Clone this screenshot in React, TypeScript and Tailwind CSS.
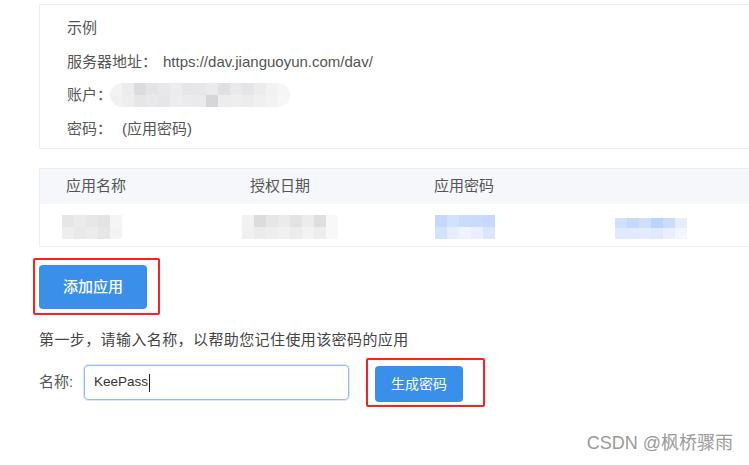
import React from "react";

const font = {
  fontFamily: '"Liberation Sans", "Noto Sans CJK SC", Arial, sans-serif',
};

type BlurProps = {
  cols: string[][];
  cell: number;
  className?: string;
};

// pixelated mosaic used to hide private values
function Mosaic({ cols, cell, className }: BlurProps) {
  return (
    <div className={"flex blur-[0.6px] " + (className ?? "")}>
      {cols.map((col, i) => (
        <div key={i} className="flex flex-col">
          {col.map((c, j) => (
            <div key={j} style={{ width: cell, height: cell, background: c }} />
          ))}
        </div>
      ))}
    </div>
  );
}

const accountCols = [
  ["#f3f3f4", "#f1f1f2"],
  ["#ececee", "#eeeeef"],
  ["#dcdcde", "#e6e6e8"],
  ["#e4e4e6", "#e9e9eb"],
  ["#e8e8ea", "#e6e6e8"],
  ["#ececee", "#ededef"],
  ["#e6e6e8", "#ebebed"],
  ["#e7e7e9", "#eaeaec"],
  ["#eaeaec", "#d6d6d8"],
  ["#e0e0e2", "#ededef"],
  ["#e9e9eb", "#eeeeef"],
  ["#e5e5e7", "#ececee"],
  ["#ececee", "#f0f0f1"],
  ["#f2f2f3", "#f3f3f4"],
  ["#f6f6f7", "#f7f7f8"],
];

const nameCols = [
  ["#e6e6e6", "#eeeeee"],
  ["#ebebeb", "#e9e9e9"],
  ["#e7e7e7", "#ececec"],
  ["#e4e4e4", "#e6e6e6"],
  ["#f5f5f5", "#f4f4f4"],
];

const dateCols = [
  ["#f1f1f1", "#f0f0f0"],
  ["#dcdcdc", "#ebebeb"],
  ["#e6e6e6", "#eeeeee"],
  ["#ebebeb", "#f1f1f1"],
  ["#e3e3e3", "#ececec"],
  ["#ececec", "#f2f2f2"],
  ["#dedede", "#ededed"],
  ["#f8f8f8", "#f8f8f8"],
];

const pwCols = [
  ["#c3d8fb", "#d3e2fd"],
  ["#d2e2fd", "#e6eefe"],
  ["#cadcfc", "#eef3fe"],
  ["#c9dbfc", "#e9effe"],
  ["#c6d9fc", "#d9e6fd"],
];

const pw2Cols = [
  ["#d1e0fd", "#e0eafe"],
  ["#c6d9fc", "#e1eafe"],
  ["#cfdffd", "#e3ecfe"],
  ["#bcd3fb", "#dfe9fe"],
  ["#cbdcfc", "#e9effe"],
  ["#e6eefe", "#f2f6fe"],
];

export default function App() {
  return (
    <div
      className="relative h-[465px] w-[749px] overflow-hidden bg-white pl-[39px] pt-[4px] text-[15px] text-[#555]"
      style={font}
    >
      {/* example box */}
      <section className="-mr-6 h-[145px] border border-[#ebeef5] pl-[27px] pt-[6px] leading-[33.5px]">
        <p>示例</p>
        <p>
          服务器地址：
          <span className="ml-[6px]">https://dav.jianguoyun.com/dav/</span>
        </p>
        <div className="flex items-center">
          <span>账户：</span>
          <Mosaic
            cols={accountCols}
            cell={12}
            className="-ml-[2px] mt-[1px] overflow-hidden rounded-full"
          />
        </div>
        <p>
          密码：
          <span className="ml-[10px]">(应用密码)</span>
        </p>
      </section>

      {/* app table */}
      <section className="-mr-6 mt-[19px] border border-[#ebeef5]">
        <div className="grid h-[35px] grid-cols-[184px_184px_180px_1fr] items-center bg-[#f5f7fa] pl-[26px] text-[#555]">
          <span>应用名称</span>
          <span>授权日期</span>
          <span>应用密码</span>
          <span />
        </div>
        <div className="grid h-[42px] grid-cols-[184px_184px_180px_1fr] items-center border-t border-white pl-[22px]">
          <Mosaic cols={nameCols} cell={12} className="mt-[2px]" />
          <Mosaic cols={dateCols} cell={12} className="-ml-[4px] mt-[2px]" />
          <Mosaic cols={pwCols} cell={12} className="ml-[5px] mt-[2px]" />
          <Mosaic cols={pw2Cols} cell={12} className="ml-[5px] mt-[5px] h-[21px] overflow-hidden" />
        </div>
      </section>

      {/* add app */}
      <div className="-ml-[6px] mt-[11px] inline-block rounded-[2px] border-2 border-[#ff1f1f] pb-[4px] pl-[4px] pr-[11px] pt-[5px]">
        <button className="h-[44px] w-[108px] rounded-[4px] bg-[#3a8fe9] text-[15px] font-medium text-white">
          添加应用
        </button>
      </div>

      <p className="mt-[15px] text-[15px] leading-[20px] tracking-[0.4px] text-[#444]">
        第一步，请输入名称，以帮助您记住使用该密码的应用
      </p>

      <div className="mt-[8px] flex items-center">
        <span className="w-[45px] text-[#555]">名称:</span>
        <div className="flex h-[35px] w-[265px] items-center rounded-[4px] border border-[#8fbcf3] pl-[9px] text-[13.5px] text-[#333] shadow-[0_0_0_1px_#dbe9fb]">
          KeePass
          <span className="ml-[1px] h-[18px] w-px bg-[#222]" />
        </div>
        <div className="ml-[17px] rounded-[2px] border-2 border-[#ff1f1f] pb-[3px] pl-[7px] pr-[20px] pt-[6px]">
          <button className="h-[36px] w-[88px] rounded-[4px] bg-[#3a8fe9] text-[14px] text-white">
            生成密码
          </button>
        </div>
      </div>

      {/* watermark */}
      <div className="absolute bottom-[8px] right-[16px] text-[18px] text-[#9a9a9a] [text-shadow:0_0_2px_#fff]">
        CSDN @枫桥骤雨
      </div>
    </div>
  );
}
